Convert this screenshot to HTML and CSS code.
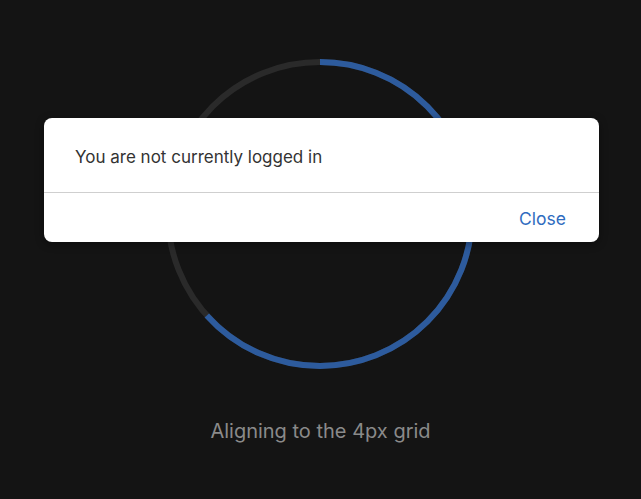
FILE: index.html
```html
<!DOCTYPE html>
<html>
<head>
<meta charset="utf-8">
<link rel="stylesheet" href="styles.css">
</head>
<body>
<main class="screen">
  <div class="spinner">
    <svg class="ring" width="310" height="310" viewBox="0 0 310 310">
      <circle class="track" cx="155" cy="155" r="152"></circle>
      <circle class="progress" cx="155" cy="155" r="152" style="stroke-dasharray: 605 1000"></circle>
    </svg>
  </div>
  <p class="caption">Aligning to the 4px grid</p>
</main>
<div class="dialog" role="dialog">
  <div class="dialog-body">You are not currently logged in</div>
  <div class="dialog-actions">
    <button class="btn-close">Close</button>
  </div>
</div>
</body>
</html>
```

FILE: styles.css
```css
html, body {
  margin: 0;
  padding: 0;
  height: 100%;
}
body {
  background: #141414;
  font-family: Inter, "Noto Sans", sans-serif;
  overflow: hidden;
}
.screen {
  display: flex;
  flex-direction: column;
  align-items: center;
  padding-top: 59px;
}
.spinner {
  width: 310px;
  height: 310px;
  margin-right: 2px;
}
.ring {
  display: block;
  transform: rotate(-90deg);
}
.track {
  fill: none;
  stroke: #2a2a2a;
  stroke-width: 6;
}
.progress {
  fill: none;
  stroke: #2d5b9d;
  stroke-width: 6;
}
.caption {
  margin: 50px 0 0;
  font-size: 20px;
  line-height: 24px;
  color: #8a8a8a;
}
.dialog {
  position: absolute;
  left: 44px;
  top: 118px;
  width: 555px;
  background: #fff;
  border-radius: 8px;
  box-shadow: 0 2px 8px rgba(0,0,0,0.4);
  overflow: hidden;
}
.dialog-body {
  height: 75px;
  display: flex;
  align-items: center;
  padding-left: 31px;
  font-size: 17px;
  color: #333;
  border-bottom: 1px solid #cfcfcf;
  box-sizing: border-box;
  padding-top: 4px;
}
.dialog-actions {
  height: 49px;
  display: flex;
  justify-content: flex-end;
  align-items: center;
  padding-right: 33px;
  padding-top: 2px;
  box-sizing: border-box;
}
.btn-close {
  background: none;
  border: none;
  padding: 0;
  font-family: inherit;
  font-size: 17.5px;
  color: #2f6cc0;
  cursor: pointer;
}
```
